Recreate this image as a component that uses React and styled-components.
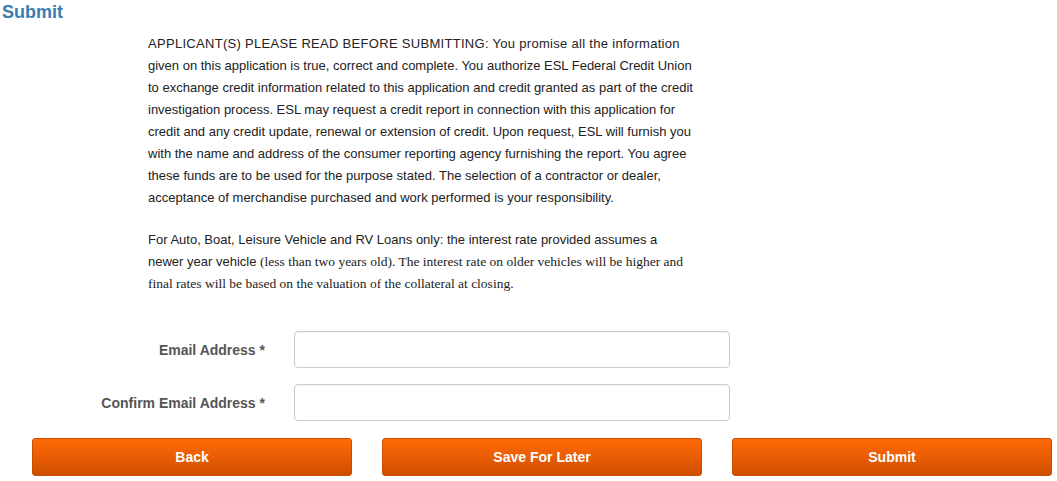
import React from "react";
import styled, { createGlobalStyle } from "styled-components";

const GlobalStyle = createGlobalStyle`
  html, body {
    margin: 0;
    padding: 0;
    background: #fff;
    font-family: "Liberation Sans", Arial, sans-serif;
    color: #222;
  }
`;

const terms = [
  "APPLICANT(S) PLEASE READ BEFORE SUBMITTING: You promise all the information",
  "given on this application is true, correct and complete. You authorize ESL Federal Credit Union",
  "to exchange credit information related to this application and credit granted as part of the credit",
  "investigation process. ESL may request a credit report in connection with this application for",
  "credit and any credit update, renewal or extension of credit. Upon request, ESL will furnish you",
  "with the name and address of the consumer reporting agency furnishing the report. You agree",
  "these funds are to be used for the purpose stated. The selection of a contractor or dealer,",
  "acceptance of merchandise purchased and work performed is your responsibility.",
];

export default function App() {
  return (
    <Page>
      <GlobalStyle />
      <Heading>Submit</Heading>
      <Disclaimer>
        <p>
          {terms.map((t, i) => (
            <Line key={t} $wide={i === 0}>
              {t}
            </Line>
          ))}
        </p>
        <p>
          <Line>
            For Auto, Boat, Leisure Vehicle and RV Loans only: the interest rate provided assumes a
          </Line>
          <Line>
            newer year vehicle{" "}
            <Serif>
              (less than two years old). The interest rate on older vehicles will be higher and
            </Serif>
          </Line>
          <Line>
            <Serif>
              final rates will be based on the valuation of the collateral at closing.
            </Serif>
          </Line>
        </p>
      </Disclaimer>
      <Form>
        <FieldRow>
          <Label htmlFor="email">Email Address *</Label>
          <Input id="email" type="email" />
        </FieldRow>
        <FieldRow>
          <Label htmlFor="confirm">Confirm Email Address *</Label>
          <Input id="confirm" type="email" />
        </FieldRow>
      </Form>
      <Actions>
        <Button>Back</Button>
        <Button>Save For Later</Button>
        <Button>Submit</Button>
      </Actions>
    </Page>
  );
}

const Page = styled.div`
  width: 1057px;
  padding-bottom: 5px;
`;

const Heading = styled.h2`
  margin: 0;
  padding: 1px 0 0 2px;
  font-size: 18px;
  line-height: 22px;
  font-weight: bold;
  color: #3a7db3;
`;

const Disclaimer = styled.div`
  width: 570px;
  margin: 10px 0 0 148px;
  font-size: 13px;
  line-height: 22px;
  color: #222;
  p {
    margin: 0 0 20px;
  }
`;

const Line = styled.span`
  display: block;
  white-space: nowrap;
  height: 22px;
  line-height: 22px;
  letter-spacing: ${(p) => (p.$wide ? "0.3px" : "0")};
`;

const Serif = styled.span`
  font-family: "Liberation Serif", "Times New Roman", serif;
  font-size: 13.5px;
  line-height: 22px;
`;

const Form = styled.div`
  display: flex;
  flex-direction: column;
  gap: 16px;
  margin-top: 36px;
`;

const FieldRow = styled.div`
  display: grid;
  grid-template-columns: 280px 436px;
  column-gap: 14px;
  align-items: center;
`;

const Label = styled.label`
  text-align: right;
  padding-right: 15px;
  font-size: 14px;
  font-weight: bold;
  color: #555;
`;

const Input = styled.input`
  box-sizing: border-box;
  height: 37px;
  width: 436px;
  border: 1px solid #ccc;
  border-radius: 4px;
  padding: 6px 12px;
  font-size: 14px;
  box-shadow: inset 0 1px 1px rgba(0, 0, 0, 0.06);
`;

const Actions = styled.div`
  display: grid;
  grid-template-columns: repeat(3, 320px);
  column-gap: 30px;
  padding-left: 32px;
  margin-top: 17px;
`;

const Button = styled.button`
  height: 38px;
  border: 1px solid #c94e00;
  border-radius: 3px;
  background: linear-gradient(to bottom, #ff6a08 0%, #e95d04 50%, #cd4f00 100%);
  color: #fff;
  font-family: "Liberation Sans", Arial, sans-serif;
  font-size: 14px;
  font-weight: bold;
  cursor: pointer;
`;
